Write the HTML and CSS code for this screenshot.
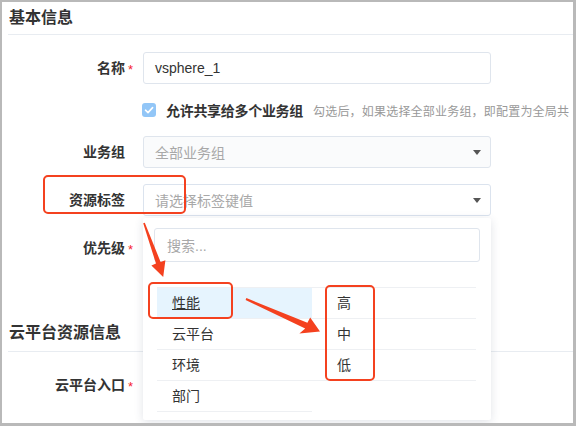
FILE: index.html
```html
<!DOCTYPE html>
<html lang="zh-CN">
<head>
<meta charset="utf-8">
<title>云平台配置</title>
<link rel="stylesheet" href="styles.css">
</head>
<body>
<div class="screen">
  <div class="frame">
    <section class="section">
      <h2 class="section-title">基本信息</h2>
      <div class="form">
        <div class="form-row">
          <label class="form-label">名称</label>
          <span class="mark">*</span>
          <div class="input">vsphere_1</div>
        </div>
        <div class="form-row form-row--check">
          <span class="form-label"></span>
          <span class="mark"></span>
          <div class="check-line">
            <span class="checkbox">
              <svg viewBox="0 0 14 14" width="14" height="14"><path d="M3.5 7.2 L6 9.6 L10.6 4.6" fill="none" stroke="#fff" stroke-width="1.6" stroke-linecap="round" stroke-linejoin="round"/></svg>
            </span>
            <span class="check-text">允许共享给多个业务组</span>
            <span class="hint">勾选后，如果选择全部业务组，即配置为全局共</span>
          </div>
        </div>
        <div class="form-row">
          <label class="form-label">业务组</label>
          <span class="mark"></span>
          <div class="select select--disabled">
            <span class="placeholder">全部业务组</span>
            <span class="caret"></span>
          </div>
        </div>
        <div class="form-row">
          <label class="form-label">资源标签</label>
          <span class="mark"></span>
          <div class="select-wrap">
            <div class="select select--open">
              <span class="placeholder">请选择标签键值</span>
              <span class="caret"></span>
            </div>
            <div class="dropdown">
              <div class="search"><span class="placeholder">搜索...</span></div>
              <div class="cascader">
                <ul class="cascader-col cascader-col--keys">
                  <li class="cascader-item is-active"><span class="item-text">性能</span></li>
                  <li class="cascader-item">云平台</li>
                  <li class="cascader-item">环境</li>
                  <li class="cascader-item">部门</li>
                </ul>
                <ul class="cascader-col cascader-col--values">
                  <li class="cascader-item">高</li>
                  <li class="cascader-item">中</li>
                  <li class="cascader-item">低</li>
                </ul>
              </div>
            </div>
          </div>
        </div>
        <div class="form-row">
          <label class="form-label">优先级</label>
          <span class="mark">*</span>
          <div class="input"></div>
        </div>
      </div>
    </section>

    <section class="section section--cloud">
      <h2 class="section-title">云平台资源信息</h2>
      <div class="form">
        <div class="form-row">
          <label class="form-label">云平台入口</label>
          <span class="mark">*</span>
          <div class="input"></div>
        </div>
      </div>
    </section>
  </div>

  <!-- callouts drawn over the form -->
  <svg class="callouts" viewBox="0 0 576 426" width="576" height="426">
    <g fill="none" stroke="#f4411f" stroke-width="2">
      <rect x="44" y="176" width="141" height="37" rx="4"/>
      <rect x="149" y="283" width="83" height="35" rx="4"/>
      <rect x="326" y="286" width="48" height="94" rx="4"/>
    </g>
    <g fill="#f4411f">
      <polygon points="144.8,222.7 160.6,262.0 165.4,260.2 163.2,277 151.4,265.4 156.0,263.6 143.2,223.3"/>
      <polygon points="246.4,298.1 307.4,322.8 310.2,317.4 320,331.5 299.4,333.6 305.2,328.6 245.6,299.9"/>
    </g>
  </svg>
</div>
</body>
</html>
```

FILE: styles.css
```css
body {
  margin: 0;
  font-family: "Liberation Sans", "Noto Sans CJK SC", sans-serif;
  color: #333;
}

.screen {
  position: relative;
  width: 576px;
  height: 426px;
}

.frame {
  box-sizing: border-box;
  width: 576px;
  height: 426px;
  border: 2px solid #b9b9b9;
  border-right-width: 3px;
  border-bottom-width: 3px;
  padding-left: 6px;
  background: #fff;
  overflow: hidden;
}

/* sections */
.section-title {
  margin: 0;
  padding-left: 1px;
  font-size: 16px;
  line-height: 32px;
  font-weight: 700;
  color: #333;
  border-bottom: 1px solid #e8ecf1;
}

.section--cloud {
  margin-top: 53px;
}

.section--cloud .section-title {
  padding-bottom: 2px;
}

/* form layout */
.form {
  padding-top: 17px;
}

.form-row {
  display: grid;
  grid-template-columns: 117px 18px 348px;
  align-items: center;
  margin-bottom: 16px;
}

.form-row:last-child {
  margin-bottom: 0;
}

.form-label {
  text-align: right;
  font-size: 14px;
  font-weight: 700;
  color: #333;
  line-height: 20px;
}

.mark {
  color: #f5222d;
  font-size: 13px;
  line-height: 1;
  padding: 3px 0 0 3px;
  align-self: center;
}

.input,
.select,
.search {
  box-sizing: border-box;
  height: 32px;
  border: 1px solid #dfe5ed;
  border-radius: 3px;
  background: #fff;
  font-size: 14px;
  display: flex;
  align-items: center;
  padding: 0 9px 0 11px;
}

.select {
  justify-content: space-between;
}

.select--disabled {
  background: #fafbfc;
}

.select--open {
  border-color: #dbe3ee;
}

.placeholder {
  color: #a8a8a8;
}

.caret {
  width: 0;
  height: 0;
  border-left: 4px solid transparent;
  border-right: 4px solid transparent;
  border-top: 5px solid #555;
}

/* checkbox line */
.form-row--check {
  height: 20px;
}

.check-line {
  display: flex;
  align-items: center;
  white-space: nowrap;
  width: 440px;
}

.checkbox {
  width: 14px;
  height: 14px;
  border-radius: 3px;
  background: #92c6f7;
  display: flex;
  margin-left: -1px;
}

.check-text {
  margin-left: 10px;
  font-size: 14px;
  font-weight: 700;
  color: #333;
  letter-spacing: -0.3px;
}

.hint {
  margin-left: 10px;
  font-size: 12px;
  color: #999;
  letter-spacing: 0.2px;
}

/* tag selector dropdown */
.select-wrap {
  position: relative;
}

.dropdown {
  position: absolute;
  top: 34px;
  left: 0;
  z-index: 5;
  box-sizing: border-box;
  width: 348px;
  height: 202px;
  padding: 10px 11px 0;
  background: #fff;
  border-radius: 2px;
  box-shadow: 0 2px 10px rgba(40, 60, 90, 0.14);
}

.search {
  height: 34px;
  padding-left: 12px;
}

.cascader {
  display: flex;
  margin: 25px 4px 0 3px;
}

.cascader-col {
  list-style: none;
  margin: 0;
  padding: 0;
  border-top: 1px solid #eef0f3;
}

.cascader-col--keys {
  width: 155px;
}

.cascader-col--values {
  flex: 1;
}

.cascader-item {
  height: 30px;
  line-height: 30px;
  font-size: 14px;
  color: #333;
  border-bottom: 1px solid #eef0f3;
  padding-left: 15px;
}

.cascader-col--values .cascader-item {
  padding-left: 25px;
}

.cascader-item.is-active {
  background: #e6f4fe;
}

.cascader-item.is-active .item-text {
  text-decoration: underline;
}

/* red callouts layer */
.callouts {
  position: absolute;
  top: 0;
  left: 0;
  pointer-events: none;
  z-index: 10;
}
```
